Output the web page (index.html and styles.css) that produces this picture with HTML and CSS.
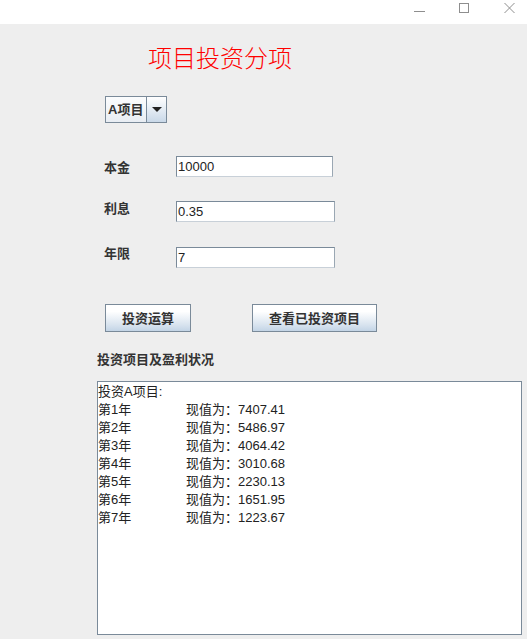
FILE: index.html
```html
<!DOCTYPE html>
<html>
<head>
<meta charset="utf-8">
<link rel="stylesheet" href="styles.css">
</head>
<body>
<div class="titlebar">
  <svg class="wc" width="12" height="12" viewBox="0 0 12 12"><line x1="0" y1="8.5" x2="11" y2="8.5" stroke="#8e8e8e" stroke-width="1"/></svg>
  <svg class="wc" width="12" height="12" viewBox="0 0 12 12"><rect x="0.5" y="0.5" width="9" height="9" fill="none" stroke="#8e8e8e" stroke-width="1"/></svg>
  <svg class="wc" width="12" height="12" viewBox="0 0 12 12"><path d="M0.5 0 L10.5 10 M10.5 0 L0.5 10" stroke="#8e8e8e" stroke-width="1" fill="none"/></svg>
</div>
<div class="main">
  <div class="title">项目投资分项</div>
  <div class="combo"><span class="combo-text">A项目</span><span class="combo-btn"><span class="arrow"></span></span></div>
  <div class="row row1"><span class="lbl lbl1">本金</span><span class="field f1">10000</span></div>
  <div class="row row2"><span class="lbl lbl2">利息</span><span class="field">0.35</span></div>
  <div class="row row3"><span class="lbl lbl3">年限</span><span class="field">7</span></div>
  <div class="buttons"><span class="btn b1">投资运算</span><span class="btn b2">查看已投资项目</span></div>
  <div class="section">投资项目及盈利状况</div>
  <div class="area">
    <div class="head">投资A项目:</div>
    <div class="line"><span class="yr">第1年</span><span>现值为：7407.41</span></div>
    <div class="line"><span class="yr">第2年</span><span>现值为：5486.97</span></div>
    <div class="line"><span class="yr">第3年</span><span>现值为：4064.42</span></div>
    <div class="line"><span class="yr">第4年</span><span>现值为：3010.68</span></div>
    <div class="line"><span class="yr">第5年</span><span>现值为：2230.13</span></div>
    <div class="line"><span class="yr">第6年</span><span>现值为：1651.95</span></div>
    <div class="line"><span class="yr">第7年</span><span>现值为：1223.67</span></div>
  </div>
</div>
</body>
</html>
```
FILE: styles.css
```css
* { box-sizing: border-box; }
html, body { margin: 0; padding: 0; }
body {
  background: #eeeeee;
  font-family: "Liberation Sans", "Noto Sans CJK SC", sans-serif;
  width: 527px;
  height: 639px;
  overflow: hidden;
}
.titlebar {
  height: 24px;
  background: #ffffff;
  display: flex;
  padding-left: 414px;
  gap: 33px;
  padding-top: 3px;
}
.wc { display: block; }
.main { display: flex; flex-direction: column; align-items: flex-start; }
.title {
  margin: 21px 0 0 148px;
  font-family: "Noto Sans CJK SC", sans-serif;
  font-weight: 300;
  font-size: 24px;
  line-height: 24px;
  color: #ff0000;
}
.combo {
  margin: 27px 0 0 105px;
  width: 62px;
  height: 27px;
  border: 1px solid #7a8a99;
  display: flex;
  background: linear-gradient(#fbfcfd, #e8edf3);
}
.combo-text {
  width: 41px;
  font-family: "Liberation Sans", "Noto Sans CJK SC", sans-serif;
  font-weight: bold;
  font-size: 13px;
  line-height: 25px;
  color: #333333;
  padding-left: 2px;
  border-right: 1px solid #7a8a99;
}
.combo-btn {
  flex: 1;
  display: flex;
  align-items: center;
  justify-content: center;
  background: linear-gradient(#ffffff, #c9d8e8);
}
.arrow {
  width: 0; height: 0;
  border-left: 5px solid transparent;
  border-right: 5px solid transparent;
  border-top: 5px solid #222222;
}
.row { display: flex; align-items: flex-start; margin-left: 104px; }
.row1 { margin-top: 33px; }
.row2 { margin-top: 24px; }
.row3 { margin-top: 25px; }
.lbl {
  width: 72px;
  font-family: "Noto Sans CJK SC", sans-serif;
  font-weight: bold;
  font-size: 13px;
  line-height: 16px;
  color: #333333;
}
.lbl1 { margin-top: 3px; }
.lbl2 { margin-top: -1px; }
.lbl3 { margin-top: -2px; }
.field {
  width: 159px;
  height: 21px;
  background: #ffffff;
  border: 1px solid #7a8a99;
  border-bottom-color: #c8d0d8;
  border-right-color: #9aa7b3;
  font-family: "Liberation Sans", sans-serif;
  font-size: 13px;
  line-height: 19px;
  padding-left: 1px;
  color: #222222;
}
.f1 { width: 157px; }
.buttons { display: flex; margin: 36px 0 0 105px; gap: 61px; }
.btn {
  height: 28px;
  border: 1px solid #7a8a99;
  background: linear-gradient(#ffffff 0%, #ffffff 25%, #d9e4ef 75%, #c3d4e6 100%);
  font-family: "Noto Sans CJK SC", sans-serif;
  font-weight: bold;
  font-size: 13px;
  line-height: 26px;
  text-align: center;
  color: #333333;
}
.b1 { width: 86px; }
.b2 { width: 125px; }
.section {
  margin: 19px 0 0 97px;
  font-family: "Noto Sans CJK SC", sans-serif;
  font-weight: bold;
  font-size: 13px;
  line-height: 16px;
  color: #333333;
}
.area {
  margin: 14px 0 0 97px;
  width: 425px;
  height: 254px;
  background: #ffffff;
  border: 1px solid #7a8a99;
  padding-top: 1px;
  font-family: "Liberation Sans", "Noto Sans CJK SC", sans-serif;
  font-size: 13px;
  line-height: 18px;
  color: #222222;
}
.line { display: flex; }
.yr { width: 88px; }
```
